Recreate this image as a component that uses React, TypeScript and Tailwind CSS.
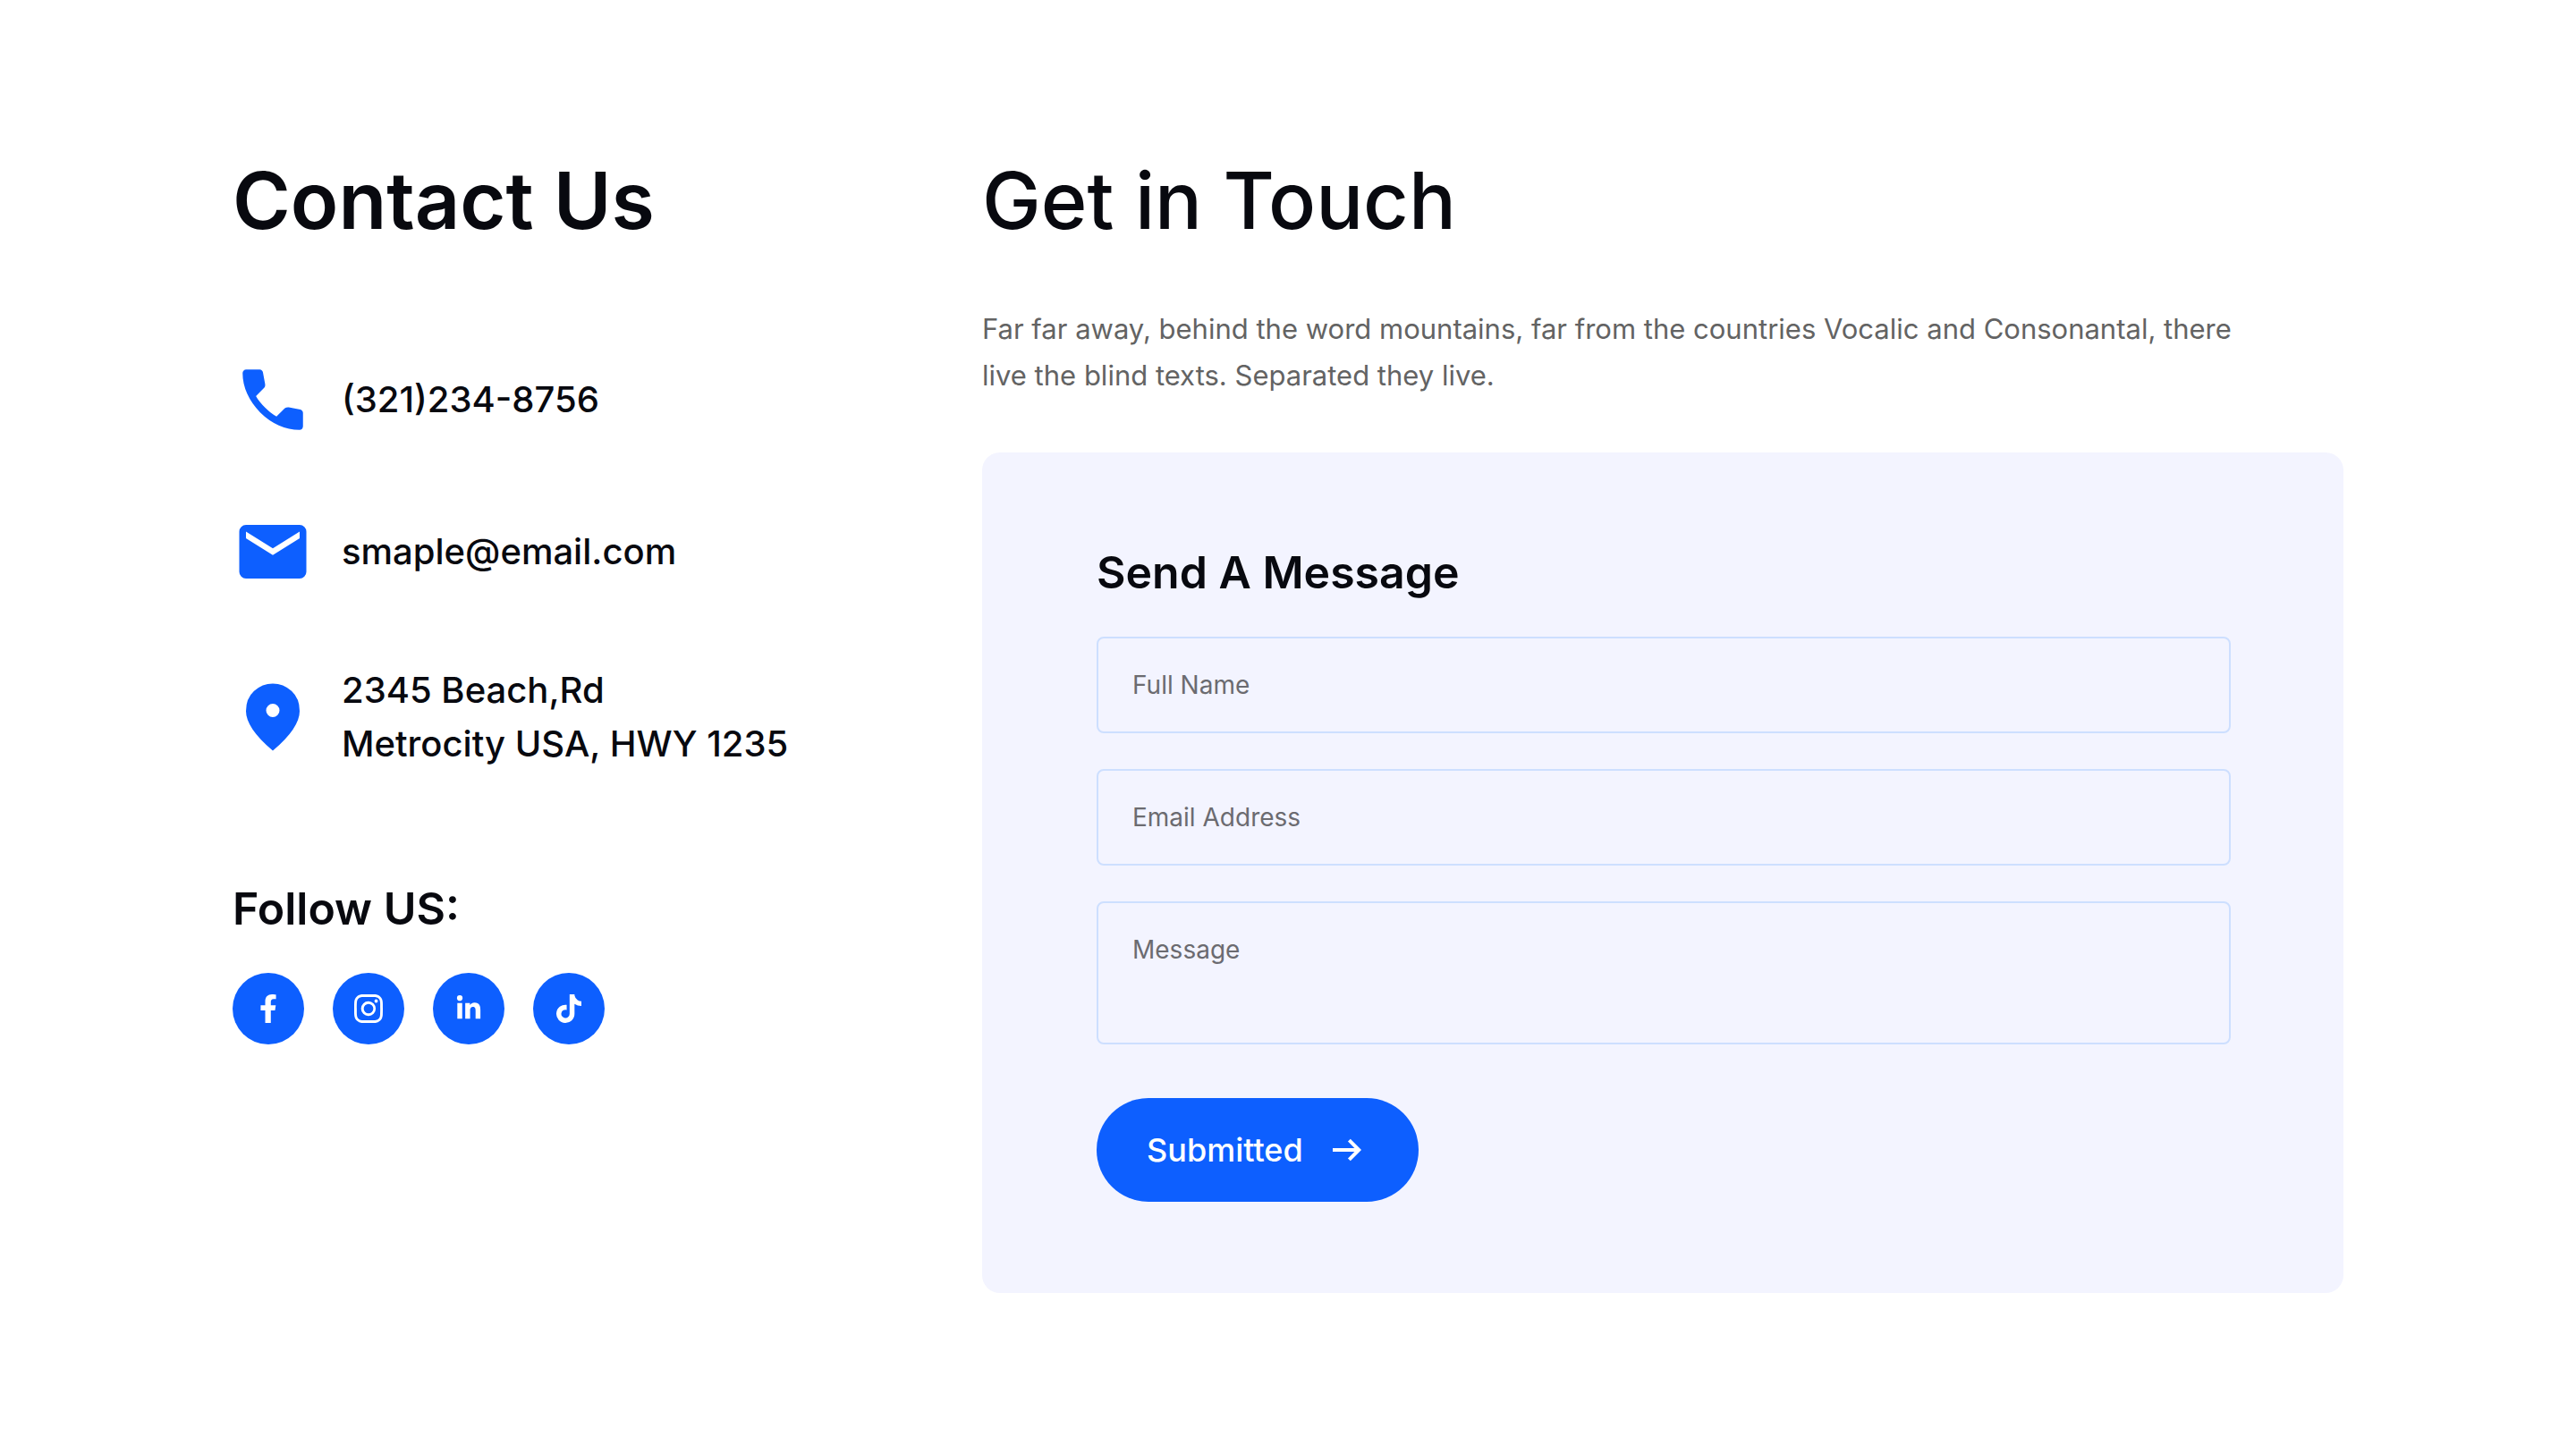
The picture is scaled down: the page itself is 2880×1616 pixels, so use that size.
import type { ReactNode } from "react";
import { BsInstagram } from "react-icons/bs";
import { FaFacebookF, FaLinkedinIn, FaTiktok } from "react-icons/fa";

const icons = {
  phone:
    "M19.95 21q-3.125 0-6.175-1.362t-5.55-3.863t-3.862-5.55T3 4.05q0-.45.3-.75t.75-.3H8.1q.35 0 .625.238t.325.562l.65 3.5q.05.4-.025.675T9.4 8.45L6.975 10.9q.5.925 1.187 1.787t1.513 1.663q.775.775 1.625 1.438T13.1 17l2.35-2.35q.225-.225.588-.337t.712-.063l3.45.7q.35.1.575.363T21 15.9v4.05q0 .45-.3.75t-.75.3",
  mail: "M4 20q-.825 0-1.412-.587T2 18V6q0-.825.588-1.412T4 4h16q.825 0 1.413.588T22 6v12q0 .825-.587 1.413T20 20zm8-7l8-5V6l-8 5l-8-5v2z",
  pin: "M12 12q.825 0 1.412-.587T14 10t-.587-1.412T12 8t-1.412.588T10 10t.588 1.413T12 12m0 10q-4.025-3.425-6.012-6.362T4 10.2q0-3.75 2.413-5.975T12 2t5.588 2.225T20 10.2q0 2.5-1.987 5.438T12 22",
};

const socials = [
  { name: "Facebook", icon: <FaFacebookF className="size-8" /> },
  { name: "Instagram", icon: <BsInstagram className="size-8" /> },
  { name: "LinkedIn", icon: <FaLinkedinIn className="size-[30px]" /> },
  { name: "TikTok", icon: <FaTiktok className="size-8" /> },
];

function ContactItem({ path, children }: { path: string; children: ReactNode }) {
  return (
    <li className="flex items-center gap-8">
      <svg viewBox="0 0 24 24" className="size-[90px] shrink-0 fill-[#0d5fff]" aria-hidden="true">
        <path d={path} />
      </svg>
      {children}
    </li>
  );
}

const field =
  "block w-full rounded-lg border-2 border-[#cddfff] bg-transparent px-[38px] text-[28px] leading-[44px] placeholder:text-[#6b6b70] focus:outline-none focus:border-[#0d5fff]";

function Arrow() {
  return (
    <svg viewBox="0 0 40 40" className="size-10" fill="none" stroke="currentColor" strokeWidth="4" aria-hidden="true">
      <path d="M4 20H33M22.4 9.2L33.2 20L22.4 30.8" />
    </svg>
  );
}

export default function App() {
  return (
    <main className="min-h-screen bg-white font-['Inter',sans-serif] text-[#08090f]">
      <div className="mx-auto grid max-w-[2360px] grid-cols-[minmax(0,838fr)_minmax(0,1522fr)] pt-[170px] pb-[170px]">
        <section>
          <h1 className="text-[88px] leading-[108px] font-semibold">Contact Us</h1>
          <ul className="mt-[124px] flex flex-col gap-20 text-[40px] leading-[60px] font-medium">
            <ContactItem path={icons.phone}>
              <a href="tel:3212348756">(321)234-8756</a>
            </ContactItem>
            <ContactItem path={icons.mail}>
              <a href="mailto:smaple@email.com">smaple@email.com</a>
            </ContactItem>
            <ContactItem path={icons.pin}>
              <address className="not-italic">
                2345 Beach,Rd
                <br />
                Metrocity USA, HWY 1235
              </address>
            </ContactItem>
          </ul>
          <h2 className="mt-[124px] text-[50px] leading-[60px] font-semibold">Follow US:</h2>
          <ul className="mt-[42px] flex gap-8">
            {socials.map(({ name, icon }) => (
              <li key={name}>
                <a
                  href={`#${name.toLowerCase()}`}
                  aria-label={name}
                  className="flex size-20 items-center justify-center rounded-full bg-[#0d5fff] text-white"
                >
                  {icon}
                </a>
              </li>
            ))}
          </ul>
        </section>

        <section>
          <h1 className="text-[88px] leading-[108px] font-medium">Get in Touch</h1>
          <p className="mt-16 max-w-[1420px] text-[31px] leading-[52px] text-[#636363]">
            Far far away, behind the word mountains, far from the countries Vocalic and Consonantal, there live the
            blind texts. Separated they live.
          </p>
          <form
            className="mt-[60px] rounded-[20px] bg-[#f3f4ff] pt-[104px] pr-[126px] pb-[102px] pl-32"
            onSubmit={(e) => e.preventDefault()}
          >
            <h2 className="text-[50px] leading-[60px] font-semibold">Send A Message</h2>
            <div className="mt-[42px] flex flex-col gap-10">
              <input className={`${field} h-[108px]`} type="text" aria-label="Full Name" placeholder="Full Name" />
              <input
                className={`${field} h-[108px]`}
                type="email"
                aria-label="Email Address"
                placeholder="Email Address"
              />
              <textarea
                className={`${field} h-40 resize-none py-[30px]`}
                aria-label="Message"
                placeholder="Message"
              />
            </div>
            <button
              type="submit"
              className="mt-[60px] flex h-[116px] items-center gap-[29px] rounded-full bg-[#0d5fff] pr-[60px] pl-14 text-[36px] leading-[44px] font-medium text-white"
            >
              Submitted
              <Arrow />
            </button>
          </form>
        </section>
      </div>
    </main>
  );
}
